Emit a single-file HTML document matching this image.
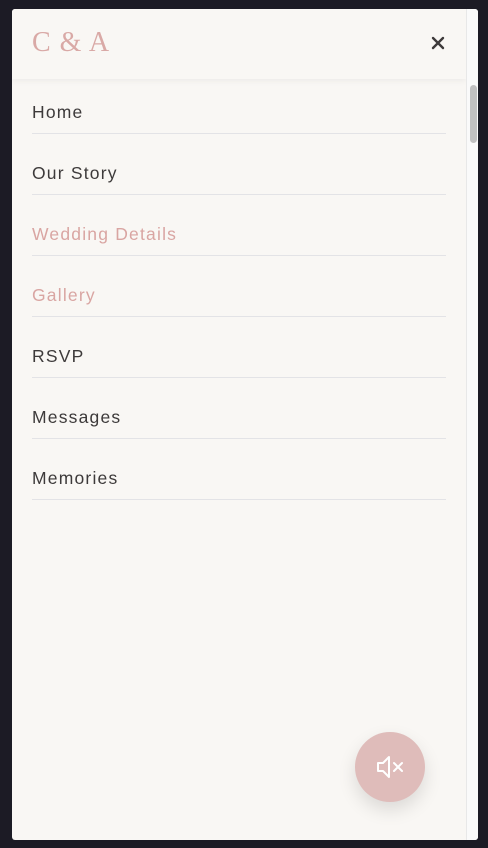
<!DOCTYPE html>
<html><head><style>
*{margin:0;padding:0;box-sizing:border-box}
body{width:488px;height:848px;background:#1c1b25;position:relative;overflow:hidden;font-family:"Liberation Sans",sans-serif}
.panel{position:absolute;left:12px;top:9px;width:466px;height:831px;background:#f9f7f4;border-radius:3px;overflow:hidden}
.head{position:absolute;left:0;top:0;width:454px;height:70px;background:#f9f7f4;box-shadow:0 2px 6px rgba(0,0,0,0.05)}
.logo{position:absolute;left:20px;top:17px;font-family:"Liberation Serif",serif;font-size:28px;color:#d9a9a6;letter-spacing:1px;line-height:34px}
.x{position:absolute;left:418px;top:26px}
.sb{position:absolute;left:454px;top:0;width:12px;height:831px;background:#fafafa;border-left:1px solid #e8e8e8}
.thumb{position:absolute;left:458px;top:76px;width:7px;height:58px;background:#c1c1c1;border-radius:4px}
.item{position:absolute;left:20px;width:414px;height:61px;border-bottom:1px solid #e3e3e6;font-size:17.5px;letter-spacing:1.2px;color:#3d3a3a;padding-top:29px;line-height:20px}
.pink{color:#d9a5a2}
.btn{position:absolute;left:343px;top:723px;width:70px;height:70px;border-radius:50%;background:#dfbcba;box-shadow:0 8px 18px rgba(0,0,0,0.12)}
</style></head><body>
<div class="panel">
<div class="item" style="top:64px">Home</div>
<div class="item" style="top:125px">Our Story</div>
<div class="item pink" style="top:186px">Wedding Details</div>
<div class="item pink" style="top:247px">Gallery</div>
<div class="item" style="top:308px">RSVP</div>
<div class="item" style="top:369px">Messages</div>
<div class="item" style="top:430px">Memories</div>
<div class="head"><div class="logo">C &amp; A</div>
<svg class="x" width="16" height="16" viewBox="0 0 16 16"><path d="M3 3L13 13M13 3L3 13" stroke="#3d3a3a" stroke-width="2.4" stroke-linecap="round"/></svg></div>
<div class="sb"></div><div class="thumb"></div>
<div class="btn"><svg width="70" height="70" viewBox="0 0 70 70"><path d="M23 31h5l6-6v20l-6-6h-5z" fill="none" stroke="#fff" stroke-width="2" stroke-linejoin="round"/><path d="M39 31l8 8M47 31l-8 8" stroke="#fff" stroke-width="2" stroke-linecap="round"/></svg></div>
</div>
</body></html>
